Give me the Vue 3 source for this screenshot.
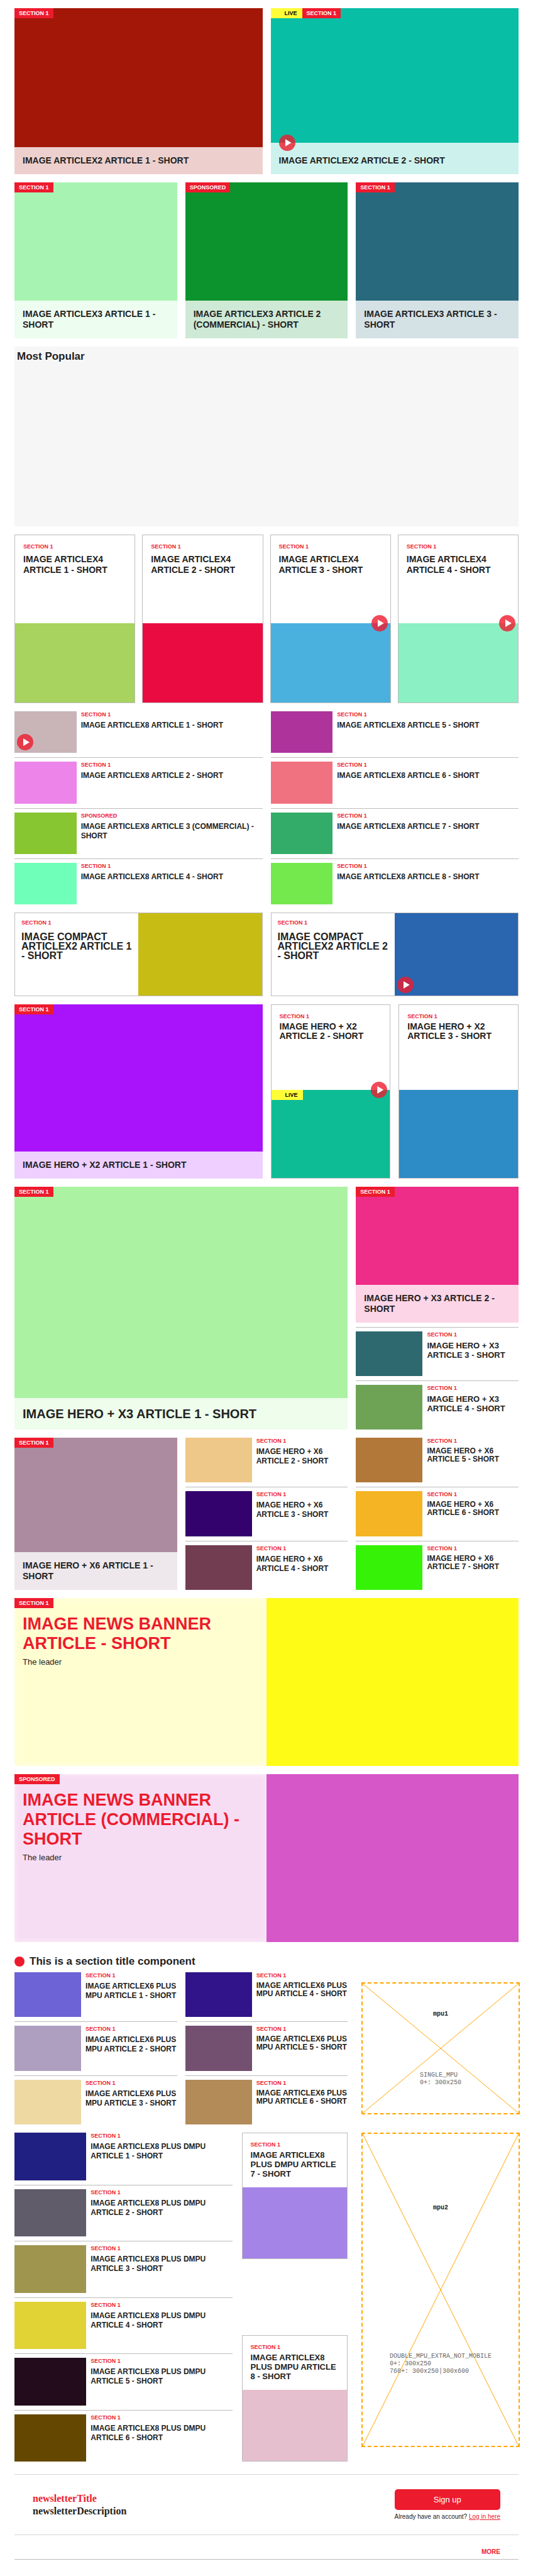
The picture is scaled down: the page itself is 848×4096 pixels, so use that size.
<script setup>
const s1 = 'SECTION 1'

const pair = [
  { title: 'IMAGE ARTICLEX2 ARTICLE 1 - SHORT', label: s1, color: '#a31709' },
  { title: 'IMAGE ARTICLEX2 ARTICLE 2 - SHORT', label: s1, color: '#08bea5', live: true, video: true },
]
const trio = [
  { title: 'IMAGE ARTICLEX3 ARTICLE 1 - SHORT', label: s1, color: '#a7f3b2' },
  { title: 'IMAGE ARTICLEX3 ARTICLE 2 (COMMERCIAL) - SHORT', label: 'SPONSORED', color: '#0c932d' },
  { title: 'IMAGE ARTICLEX3 ARTICLE 3 - SHORT', label: s1, color: '#28697d' },
]
const quad = [
  { title: 'IMAGE ARTICLEX4 ARTICLE 1 - SHORT', color: '#a7d35e' },
  { title: 'IMAGE ARTICLEX4 ARTICLE 2 - SHORT', color: '#ea0c41' },
  { title: 'IMAGE ARTICLEX4 ARTICLE 3 - SHORT', color: '#4ab1de', video: true },
  { title: 'IMAGE ARTICLEX4 ARTICLE 4 - SHORT', color: '#8bf0c4', video: true },
]
const eight = [
  [
    { title: 'IMAGE ARTICLEX8 ARTICLE 1 - SHORT', color: '#c9b4b8', video: true },
    { title: 'IMAGE ARTICLEX8 ARTICLE 2 - SHORT', color: '#ec84ea' },
    { title: 'IMAGE ARTICLEX8 ARTICLE 3 (COMMERCIAL) - SHORT', label: 'SPONSORED', color: '#87c531' },
    { title: 'IMAGE ARTICLEX8 ARTICLE 4 - SHORT', color: '#70ffb8' },
  ],
  [
    { title: 'IMAGE ARTICLEX8 ARTICLE 5 - SHORT', color: '#ae349c' },
    { title: 'IMAGE ARTICLEX8 ARTICLE 6 - SHORT', color: '#f07280' },
    { title: 'IMAGE ARTICLEX8 ARTICLE 7 - SHORT', color: '#34ac69' },
    { title: 'IMAGE ARTICLEX8 ARTICLE 8 - SHORT', color: '#74e94d' },
  ],
]
const compact = [
  { title: 'IMAGE COMPACT ARTICLEX2 ARTICLE 1 - SHORT', color: '#c7bc13' },
  { title: 'IMAGE COMPACT ARTICLEX2 ARTICLE 2 - SHORT', color: '#2a65af', video: true },
]
const heroTwo = [
  { title: 'IMAGE HERO + X2 ARTICLE 2 - SHORT', color: '#0dbc95', live: true, video: true },
  { title: 'IMAGE HERO + X2 ARTICLE 3 - SHORT', color: '#2d8bc5' },
]
const heroThree = [
  { title: 'IMAGE HERO + X3 ARTICLE 3 - SHORT', color: '#2e6970' },
  { title: 'IMAGE HERO + X3 ARTICLE 4 - SHORT', color: '#6ea356' },
]
const series = (prefix, first, colors) =>
  colors.map((color, i) => ({ title: `${prefix} ${first + i} - SHORT`, color }))

const heroSix = [
  series('IMAGE HERO + X6 ARTICLE', 2, ['#eec888', '#33026c', '#723d51']),
  series('IMAGE HERO + X6 ARTICLE', 5, ['#b27839', '#f4b423', '#35f207']),
]
const banners = [
  { title: 'IMAGE NEWS BANNER ARTICLE - SHORT', label: s1, color: '#fefb17' },
  { title: 'IMAGE NEWS BANNER ARTICLE (COMMERCIAL) - SHORT', label: 'SPONSORED', color: '#d557c8' },
]
const sixMpu = [
  series('IMAGE ARTICLEX6 PLUS MPU ARTICLE', 1, ['#6d62d6', '#ae9fc0', '#eed9a3']),
  series('IMAGE ARTICLEX6 PLUS MPU ARTICLE', 4, ['#31148a', '#735070', '#b28b59']),
]
const dmpuList = series('IMAGE ARTICLEX8 PLUS DMPU ARTICLE', 1, [
  '#202082', '#605c6a', '#9f954f', '#e1d335', '#230d1c', '#644802',
])
const dmpuCards = series('IMAGE ARTICLEX8 PLUS DMPU ARTICLE', 7, ['#a584e8', '#e5bfce'])
</script>

<template>
  <main class="page">
    <section class="row cols-2 row-pair">
      <article v-for="a in pair" :key="a.title" class="tile" :style="{ backgroundColor: a.color }">
        <div class="tile-image">
          <span v-if="a.live" class="badge live">LIVE</span>
          <span class="badge">{{ a.label }}</span>
        </div>
        <div class="tile-text" :class="{ 'with-icon': a.video }">
          <span v-if="a.video" class="play play-over"></span>
          <h3 class="title"><a href="#">{{ a.title }}</a></h3>
        </div>
      </article>
    </section>

    <section class="row cols-3 row-trio">
      <article v-for="a in trio" :key="a.title" class="tile" :style="{ backgroundColor: a.color }">
        <div class="tile-image"><span class="badge">{{ a.label }}</span></div>
        <div class="tile-text"><h3 class="title"><a href="#">{{ a.title }}</a></h3></div>
      </article>
    </section>

    <section class="popular"><h2 class="heading">Most Popular</h2></section>

    <section class="row cols-4">
      <article v-for="a in quad" :key="a.title" class="card card-tall">
        <div class="card-text">
          <p class="label">SECTION 1</p>
          <h3 class="title"><a href="#">{{ a.title }}</a></h3>
        </div>
        <div class="card-image" :style="{ backgroundColor: a.color }">
          <span v-if="a.video" class="play play-edge"></span>
        </div>
      </article>
    </section>

    <section class="row cols-2 row-eight">
      <ul v-for="(list, i) in eight" :key="i" class="list list-wide">
        <li v-for="a in list" :key="a.title" class="item">
          <div class="thumb" :style="{ backgroundColor: a.color }">
            <span v-if="a.video" class="play play-corner"></span>
          </div>
          <div class="item-text">
            <p class="label">{{ a.label || s1 }}</p>
            <h3 class="title"><a href="#">{{ a.title }}</a></h3>
          </div>
        </li>
      </ul>
    </section>

    <section class="row cols-2 row-compact">
      <article v-for="a in compact" :key="a.title" class="compact">
        <div class="compact-text">
          <p class="label">SECTION 1</p>
          <h3 class="title"><a href="#">{{ a.title }}</a></h3>
        </div>
        <div class="compact-image" :style="{ backgroundColor: a.color }">
          <span v-if="a.video" class="play play-corner"></span>
        </div>
      </article>
    </section>

    <section class="row cols-2 row-hero-two">
      <article class="tile purple">
        <div class="tile-image"><span class="badge">SECTION 1</span></div>
        <div class="tile-text"><h3 class="title"><a href="#">IMAGE HERO + X2 ARTICLE 1 - SHORT</a></h3></div>
      </article>
      <div class="row cols-2">
        <article v-for="a in heroTwo" :key="a.title" class="card card-hero">
          <div class="card-text">
            <p class="label">SECTION 1</p>
            <h3 class="title"><a href="#">{{ a.title }}</a></h3>
          </div>
          <div class="card-image" :style="{ backgroundColor: a.color }">
            <span v-if="a.live" class="badge live">LIVE</span>
            <span v-if="a.video" class="play play-edge"></span>
          </div>
        </article>
      </div>
    </section>

    <section class="row cols-3 row-hero-three">
      <article class="tile large mint span-2">
        <div class="tile-image"><span class="badge">SECTION 1</span></div>
        <div class="tile-text"><h3 class="title"><a href="#">IMAGE HERO + X3 ARTICLE 1 - SHORT</a></h3></div>
      </article>
      <div class="stack">
        <article class="tile pink">
          <div class="tile-image"><span class="badge">SECTION 1</span></div>
          <div class="tile-text"><h3 class="title"><a href="#">IMAGE HERO + X3 ARTICLE 2 - SHORT</a></h3></div>
        </article>
        <article v-for="a in heroThree" :key="a.title" class="item item-larger">
          <div class="thumb" :style="{ backgroundColor: a.color }"></div>
          <div class="item-text">
            <p class="label">SECTION 1</p>
            <h3 class="title"><a href="#">{{ a.title }}</a></h3>
          </div>
        </article>
      </div>
    </section>

    <section class="row cols-3 row-six">
      <article class="tile mauve">
        <div class="tile-image"><span class="badge">SECTION 1</span></div>
        <div class="tile-text"><h3 class="title"><a href="#">IMAGE HERO + X6 ARTICLE 1 - SHORT</a></h3></div>
      </article>
      <ul v-for="(list, i) in heroSix" :key="i" class="list" :class="{ tight: i === 1 }">
        <li v-for="a in list" :key="a.title" class="item">
          <div class="thumb" :style="{ backgroundColor: a.color }"></div>
          <div class="item-text">
            <p class="label">SECTION 1</p>
            <h3 class="title"><a href="#">{{ a.title }}</a></h3>
          </div>
        </li>
      </ul>
    </section>

    <article v-for="b in banners" :key="b.title" class="banner" :style="{ backgroundColor: b.color }">
      <div class="banner-text">
        <span class="badge">{{ b.label }}</span>
        <h2 class="banner-title"><a href="#">{{ b.title }}</a></h2>
        <p class="leader">The leader</p>
      </div>
    </article>

    <section>
      <h2 class="heading section-title"><span class="dot"></span>This is a section title component</h2>
      <div class="row cols-3 row-six">
        <ul v-for="(list, i) in sixMpu" :key="i" class="list" :class="{ tight: i === 1 }">
          <li v-for="a in list" :key="a.title" class="item">
            <div class="thumb" :style="{ backgroundColor: a.color }"></div>
            <div class="item-text">
              <p class="label">SECTION 1</p>
              <h3 class="title"><a href="#">{{ a.title }}</a></h3>
            </div>
          </li>
        </ul>
        <aside class="ad ad-single">
          <svg class="ad-cross" viewBox="0 0 100 100" preserveAspectRatio="none" aria-hidden="true">
            <path d="M0 0L100 100M100 0L0 100" vector-effect="non-scaling-stroke" />
          </svg>
          <strong>mpu1</strong>
          <p>SINGLE_MPU<br />0+: 300x250</p>
        </aside>
      </div>
    </section>

    <section class="row cols-3">
      <div class="row dmpu span-2">
        <ul class="list list-dmpu">
          <li v-for="a in dmpuList" :key="a.title" class="item">
            <div class="thumb" :style="{ backgroundColor: a.color }"></div>
            <div class="item-text">
              <p class="label">SECTION 1</p>
              <h3 class="title"><a href="#">{{ a.title }}</a></h3>
            </div>
          </li>
        </ul>
        <div class="dmpu-cards">
          <article v-for="a in dmpuCards" :key="a.title" class="card card-small">
            <div class="card-text">
              <p class="label">SECTION 1</p>
              <h3 class="title"><a href="#">{{ a.title }}</a></h3>
            </div>
            <div class="card-image" :style="{ backgroundColor: a.color }"></div>
          </article>
        </div>
      </div>
      <aside class="ad ad-double">
        <svg class="ad-cross" viewBox="0 0 100 100" preserveAspectRatio="none" aria-hidden="true">
          <path d="M0 0L100 100M100 0L0 100" vector-effect="non-scaling-stroke" />
        </svg>
        <strong>mpu2</strong>
        <p>DOUBLE_MPU_EXTRA_NOT_MOBILE<br />0+: 300x250<br />768+: 300x250|300x600</p>
      </aside>
    </section>

    <footer class="foot">
      <section class="newsletter">
        <div class="newsletter-copy">
          <p class="newsletter-title">newsletterTitle</p>
          <p>newsletterDescription</p>
        </div>
        <div class="signup">
          <button type="button">Sign up</button>
          <p>Already have an account? <a href="#">Log in here</a></p>
        </div>
      </section>
      <div class="more"><a href="#">MORE</a></div>
    </footer>
  </main>
</template>

<style>
body {
  margin: 0;
  background: #fff;
}
</style>

<style scoped>
.page {
  --red: #ed1b2e;
  --ink: #222;
  --line: #bcbcbc;
  display: flex;
  flex-direction: column;
  gap: 13px;
  padding: 13px 23px 26px;
  font-family: "Liberation Sans", Arial, sans-serif;
  color: var(--ink);
}
.page *,
.page *::before {
  box-sizing: border-box;
}
h2,
h3,
p,
ul {
  margin: 0;
  padding: 0;
}
a {
  color: inherit;
  text-decoration: none;
}
.row {
  display: grid;
  gap: 13px;
}
.cols-2 { grid-template-columns: repeat(2, minmax(0, 1fr)); }
.cols-3 { grid-template-columns: repeat(3, minmax(0, 1fr)); }
.cols-4 {
  grid-template-columns: repeat(4, minmax(0, 1fr));
  gap: 11px;
}
.span-2 { grid-column: span 2; }
.row-pair { min-height: 264px; }
.row-trio { min-height: 248px; }
.row-eight { min-height: 307px; }
.row-compact { min-height: 133px; }
.row-hero-two { min-height: 277px; }
.row-hero-three { min-height: 386px; }
.row-six { min-height: 242px; }

.title {
  font-size: 14px;
  line-height: 17px;
}
.label {
  font-size: 9px;
  line-height: 11px;
  font-weight: bold;
  color: var(--red);
}
.badge {
  height: 16px;
  padding: 0 7px;
  font-size: 9px;
  line-height: 17px;
  font-weight: bold;
  color: #fff;
  background: var(--red);
}
.badge.live {
  padding: 0 8px 0 22px;
  color: #000;
  background: #fffd38;
}

/* Coloured tile with a translucent caption */
.tile {
  display: flex;
  flex-direction: column;
}
.tile-image {
  flex: 1;
  display: flex;
  align-items: flex-start;
}
.tile-text {
  position: relative;
  padding: 13px;
  background: rgba(255, 255, 255, 0.8);
}
.tile-text.with-icon { padding-top: 20px; }
.large .title {
  font-size: 20px;
  line-height: 24px;
}
.purple { background: #a813fc; }
.mint { background: #abf3a2; }
.pink { background: #ed2d87; }
.mauve { background: #ac8ba0; }

.play {
  position: absolute;
  width: 26px;
  height: 26px;
  border-radius: 50%;
  background: rgba(237, 27, 46, 0.8);
}
.play::before {
  content: "";
  position: absolute;
  left: 10px;
  top: 7px;
  width: 10px;
  height: 12px;
  background: #fff;
  clip-path: polygon(0 0, 100% 50%, 0 100%);
}
.play-over { left: 13px; top: -13px; }
.play-edge { right: 4px; top: -13px; }
.play-corner { left: 4px; bottom: 4px; }

.heading {
  font-size: 17px;
  line-height: 21px;
}
.popular {
  min-height: 286px;
  padding: 5px 4px;
  background: #f6f6f6;
}

/* Outlined card */
.card {
  display: flex;
  flex-direction: column;
  border: 1px solid var(--line);
}
.card-text {
  flex: 1;
  padding: 13px 12px 13px 13px;
}
.card-image {
  position: relative;
  display: flex;
  align-items: flex-start;
}
.card .title {
  margin-top: 3px;
  line-height: 15px;
}
.card-tall { min-height: 268px; }
.card-tall .title {
  margin-top: 6px;
  line-height: 17px;
}
.card-tall .card-image { height: 126px; }
.card-hero .card-image { height: 140px; }
.card-small { min-height: 201px; }
.card-small .card-image { height: 113px; }
.card-small .title { font-size: 13px; }

/* Thumbnail rows */
.list,
.stack {
  display: flex;
  flex-direction: column;
  list-style: none;
}
.item {
  flex: 1 1 0;
  display: flex;
  gap: 7px;
}
.item + .item,
.tile + .item {
  margin-top: 7px;
  padding-top: 6px;
  border-top: 1px solid var(--line);
}
.thumb {
  position: relative;
  flex: none;
  width: 41%;
}
.list-wide .thumb { width: 25%; }
.item-text {
  flex: 1;
  min-width: 0;
}
.item .title {
  margin-top: 4px;
  font-size: 12px;
  line-height: 15px;
}
.tight .item .title { line-height: 13px; }
.item-larger .title { font-size: 13px; }
.item-larger {
  flex: none;
  min-height: 78px;
}
.stack .tile { flex: 1; }

.compact {
  display: flex;
  border: 1px solid var(--line);
}
.compact-text {
  flex: 1 1 0;
  padding: 10px;
}
.compact-image {
  position: relative;
  flex: 1 1 0;
}
/* The text half carries padding, so the picture half is pinned to 50% */
.compact-text,
.compact-image {
  flex: none;
  width: 50%;
}
.compact .title {
  margin-top: 9px;
  font-size: 16px;
  line-height: 15px;
}

.banner {
  display: flex;
  min-height: 267px;
}
.banner-text {
  display: flex;
  flex-direction: column;
  align-items: flex-start;
  width: 50%;
  background: rgba(255, 255, 255, 0.8);
  box-shadow: inset 0 0 8px rgba(255, 255, 255, 0.6);
}
.banner-title {
  margin-top: 10px;
  padding: 0 13px;
  font-size: 27px;
  line-height: 31px;
  color: var(--red);
}
.leader {
  margin-top: 6px;
  padding: 0 13px;
  font-size: 13px;
  line-height: 16px;
}

.section-title {
  display: flex;
  align-items: center;
  gap: 8px;
  height: 35px;
}
.dot {
  width: 16px;
  height: 16px;
  border-radius: 50%;
  background: var(--red);
}

.ad {
  position: relative;
  display: flex;
  flex-direction: column;
  align-items: center;
  justify-content: space-around;
  justify-self: end;
  width: 252px;
  margin-right: -2px;
  border: 2px dashed orange;
  font-family: "Liberation Mono", "Courier New", monospace;
  font-size: 10px;
  line-height: 12px;
}
.ad p { color: #666; }
.ad-single {
  align-self: center;
  min-height: 210px;
}
.ad-double {
  align-self: start;
  min-height: 500px;
}
.ad-cross {
  position: absolute;
  inset: 0;
  width: 100%;
  height: 100%;
}
.ad-cross path {
  fill: none;
  stroke: orange;
  stroke-width: 1;
}
.dmpu {
  grid-template-columns: minmax(0, 347fr) minmax(0, 169fr);
  gap: 15px;
}
.list-dmpu { min-height: 523px; }
.list-dmpu .thumb { width: 33%; }
.dmpu-cards {
  display: flex;
  flex-direction: column;
  justify-content: space-between;
}

.foot { margin-top: 7px; }
.newsletter {
  display: flex;
  justify-content: space-between;
  align-items: center;
  min-height: 97px;
  padding: 0 29px;
  border: solid #d4d4d4;
  border-width: 1px 0;
}
.newsletter-copy {
  font: bold 16px/20px "Liberation Serif", "Times New Roman", serif;
}
.newsletter-title { color: var(--red); }
.signup {
  font-size: 10px;
  line-height: 12px;
}
.signup button {
  display: block;
  width: 100%;
  height: 33px;
  margin: 0 0 5px;
  border: 0;
  border-radius: 5px;
  font: 13px "Liberation Sans", Arial, sans-serif;
  color: #fff;
  background: var(--red);
}
.signup a {
  color: var(--red);
  text-decoration: underline;
}
.more {
  display: flex;
  justify-content: flex-end;
  align-items: flex-end;
  min-height: 39px;
  padding: 0 29px 5px;
  border-bottom: 1px solid var(--line);
  font-size: 10px;
  line-height: 12px;
  font-weight: bold;
  color: var(--red);
}
</style>
